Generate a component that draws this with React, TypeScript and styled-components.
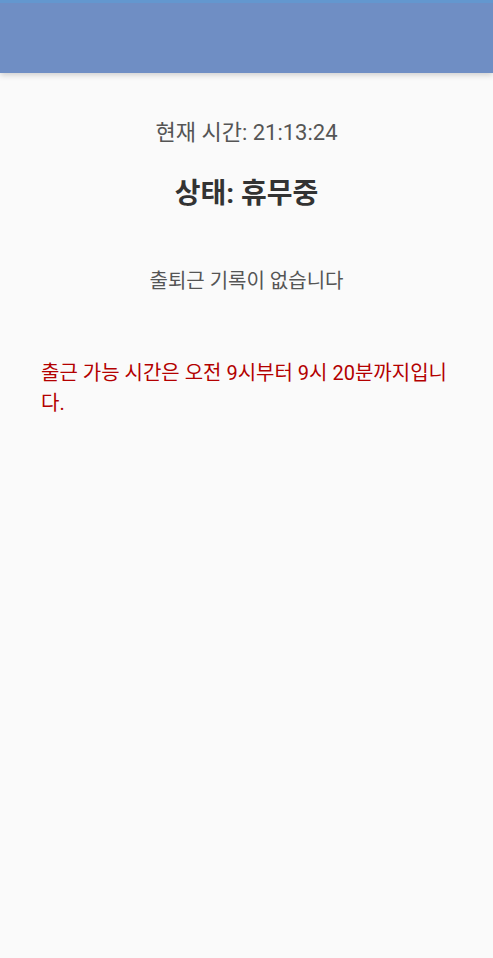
import React from 'react'
import styled, { createGlobalStyle } from 'styled-components'

const GlobalStyle = createGlobalStyle`
  html, body {
    margin: 0;
    padding: 0;
    background: #fafafa;
    font-family: Roboto, "Noto Sans CJK KR", sans-serif;
  }
`

const Page = styled.div`
  min-height: 958px;
  background: #fafafa;
`

const Header = styled.header`
  height: 70px;
  background: #6f8ec4;
  border-top: 3px solid #6397cf;
  box-shadow: 0 2px 6px rgba(0, 0, 0, 0.18);
`

const Content = styled.main`
  padding: 45px 41px 0;
  display: flex;
  flex-direction: column;
`

const Clock = styled.div`
  text-align: center;
  font-size: 22px;
  line-height: 30px;
  color: #555;
`

const Status = styled.h2`
  margin: 28px 0 0;
  text-align: center;
  font-size: 28px;
  line-height: 36px;
  font-weight: 700;
  color: #333;
`

const Empty = styled.p`
  margin: 55px 0 0;
  text-align: center;
  font-size: 20px;
  line-height: 28px;
  color: #555;
`

const Notice = styled.p`
  margin: 63px 0 0;
  font-size: 20px;
  line-height: 30px;
  color: #b30000;
`

export default function App() {
  return (
    <>
      <GlobalStyle />
      <Page>
        <Header />
        <Content>
          <Clock>현재 시간: 21:13:24</Clock>
          <Status>상태: 휴무중</Status>
          <Empty>출퇴근 기록이 없습니다</Empty>
          <Notice>출근 가능 시간은 오전 9시부터 9시 20분까지입니다.</Notice>
        </Content>
      </Page>
    </>
  )
}
